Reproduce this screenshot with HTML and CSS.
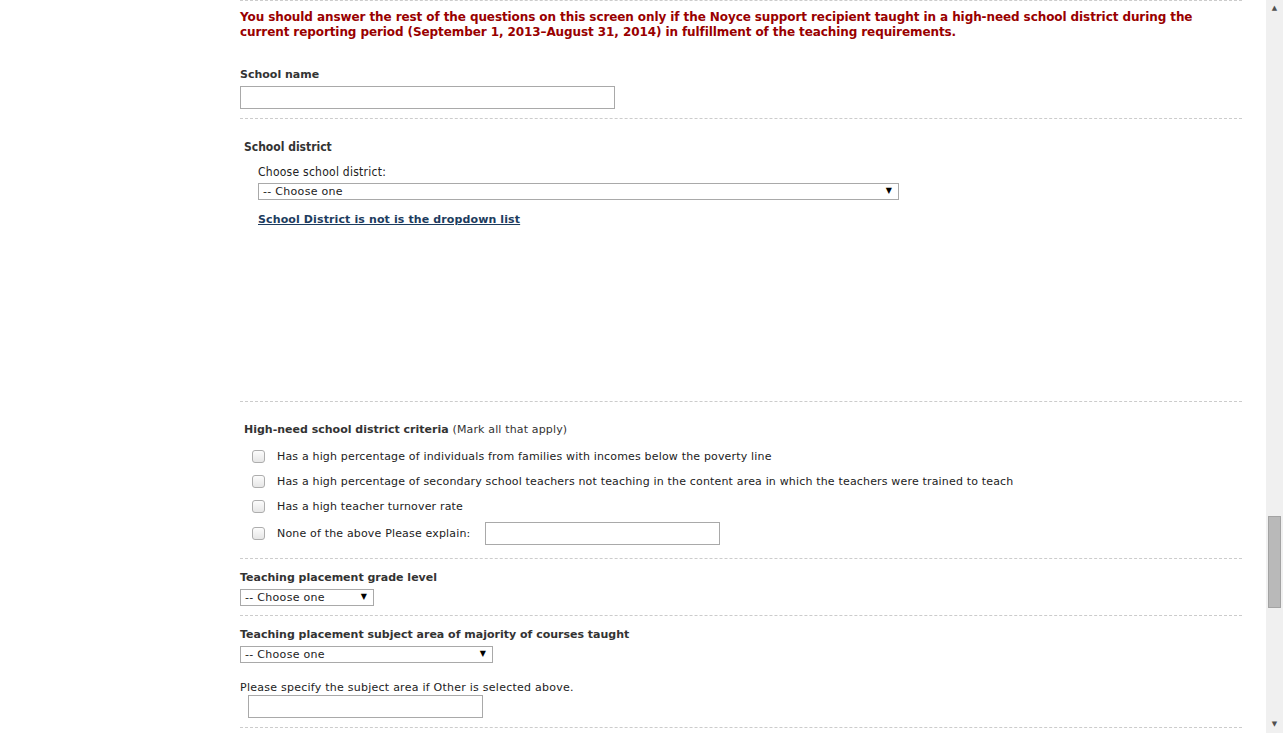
FILE: index.html
```html
<!DOCTYPE html>
<html lang="en">
<head>
    <meta charset="UTF-8">
    <title>Noyce Teacher Placement</title>
    <link rel="stylesheet" href="styles.css">
</head>
<body>
    <div class="window">
        <div class="page">
            <div class="form">
                <div class="section first">
                    <p class="notice">You should answer the rest of the questions on this screen only if the Noyce support recipient taught in a high-need school district during the current reporting period (September 1, 2013&ndash;August 31, 2014) in fulfillment of the teaching requirements.</p>
                    <label class="label" for="schoolName">School name</label>
                    <input type="text" id="schoolName" class="text wide">
                </div>

                <div class="section district">
                    <h3 class="label alt">School district</h3>
                    <div class="district-body">
                        <label class="sub" for="district">Choose school district:</label>
                        <span class="select-wrap full">
                            <select id="district"><option>-- Choose one</option></select>
                        </span>
                        <a href="#" class="missing">School District is not is the dropdown list</a>
                    </div>
                </div>

                <div class="section criteria">
                    <h3 class="label indent">High-need school district criteria <span class="hint">(Mark all that apply)</span></h3>
                    <ul class="checks">
                        <li><input type="checkbox" id="c1"><label for="c1">Has a high percentage of individuals from families with incomes below the poverty line</label></li>
                        <li><input type="checkbox" id="c2"><label for="c2">Has a high percentage of secondary school teachers not teaching in the content area in which the teachers were trained to teach</label></li>
                        <li><input type="checkbox" id="c3"><label for="c3">Has a high teacher turnover rate</label></li>
                        <li class="other"><input type="checkbox" id="c4"><label for="c4">None of the above Please explain:</label><input type="text" class="text explain"></li>
                    </ul>
                </div>

                <div class="section short">
                    <label class="label" for="grade">Teaching placement grade level</label>
                    <span class="select-wrap grade">
                        <select id="grade"><option>-- Choose one</option></select>
                    </span>
                </div>

                <div class="section subject">
                    <label class="label" for="subject">Teaching placement subject area of majority of courses taught</label>
                    <span class="select-wrap subj">
                        <select id="subject"><option>-- Choose one</option></select>
                    </span>
                    <label class="plain" for="otherSubject">Please specify the subject area if Other is selected above.</label>
                    <input type="text" id="otherSubject" class="text other-subject">
                </div>

                <div class="section last"></div>
            </div>
        </div>

        <div class="scrollbar">
            <span class="arrow up">&#9650;</span>
            <div class="track">
                <div class="thumb"></div>
            </div>
            <span class="arrow down">&#9660;</span>
        </div>
    </div>
</body>
</html>
```

FILE: styles.css
```css
html, body {
    margin: 0;
    padding: 0;
    height: 100%;
    overflow: hidden;
    background: #fff;
    font-family: "DejaVu Sans", Verdana, sans-serif;
    font-size: 11px;
    color: #222;
}

.window {
    display: flex;
    height: 733px;
}

.page {
    flex: 1;
    overflow: hidden;
}

.form {
    width: 1002px;
    margin-left: 240px;
}

.section {
    border-top: 1px dashed #ccc;
    display: flex;
    flex-direction: column;
    align-items: flex-start;
}

.first {
    height: 117px;
}

.notice {
    margin: 9px 0 0;
    color: #990000;
    font-weight: bold;
    font-size: 12px;
    line-height: 15px;
    letter-spacing: -0.09px;
}

.label {
    margin: 0;
    font-weight: bold;
    font-size: 11px;
    color: #333;
    line-height: 14px;
}

.first .label {
    margin-top: 28px;
}

.text {
    box-sizing: border-box;
    height: 23px;
    border: 1px solid #a9a9a9;
    background: #fff;
    padding: 2px 4px;
    font: inherit;
}

.wide {
    width: 375px;
    margin-top: 4px;
}

/* school district block */
.district {
    height: 282px;
}

.alt {
    margin: 21px 0 0 4px;
    font-family: "DejaVu Sans Condensed", Tahoma, sans-serif;
    font-size: 12px;
}

.district-body {
    margin-left: 18px;
    display: flex;
    flex-direction: column;
    align-items: flex-start;
}

.sub {
    margin-top: 11px;
    font-family: "DejaVu Sans Condensed", Tahoma, sans-serif;
    font-size: 12px;
    line-height: 14px;
    letter-spacing: 0.25px;
}

.select-wrap {
    position: relative;
    display: block;
}

.select-wrap select {
    appearance: none;
    -webkit-appearance: none;
    box-sizing: border-box;
    width: 100%;
    height: 17px;
    margin: 0;
    padding: 1px 4px 0;
    border: 1px solid #a9a9a9;
    border-radius: 0;
    background: #fff;
    font-family: "DejaVu Sans", Verdana, sans-serif;
    font-size: 11px;
    letter-spacing: 0.3px;
    color: #222;
    line-height: 14px;
}

.select-wrap::after {
    content: "\25BC";
    position: absolute;
    right: 7px;
    top: 3px;
    font-size: 8px;
    line-height: 10px;
    color: #000;
    pointer-events: none;
}

.full {
    width: 641px;
    margin-top: 4px;
}

.missing {
    margin-top: 13px;
    font-weight: bold;
    font-size: 11px;
    letter-spacing: 0.12px;
    color: #1d3c5e;
    line-height: 14px;
}

/* criteria */
.criteria {
    height: 156px;
}

.indent {
    margin: 21px 0 0 4px;
}

.hint {
    font-weight: normal;
    letter-spacing: 0.15px;
}

.checks {
    list-style: none;
    margin: 7px 0 0;
    padding: 0;
    letter-spacing: 0.17px;
}

.checks li {
    display: flex;
    align-items: center;
    height: 25px;
}

.checks li.other {
    height: 27px;
    margin-top: 1px;
}

.checks input[type="checkbox"] {
    appearance: none;
    -webkit-appearance: none;
    width: 13px;
    height: 13px;
    margin: 0 12px 0 12px;
    border: 1px solid #adadad;
    border-radius: 3px;
    background: linear-gradient(#fcfcfc, #e6e6e6);
    box-sizing: border-box;
}

.checks label {
    line-height: 14px;
}

.explain {
    width: 235px;
    margin-left: 15px;
}

/* grade / subject */
.short {
    height: 56px;
}

.short .label,
.subject .label {
    margin-top: 12px;
}

.grade {
    width: 134px;
    margin-top: 4px;
}

.subject {
    height: 111px;
}

.subj {
    width: 253px;
    margin-top: 4px;
}

.plain {
    margin-top: 18px;
    line-height: 14px;
    letter-spacing: 0.25px;
}

.other-subject {
    width: 235px;
    margin: 0 0 0 8px;
}

.last {
    height: 6px;
}

/* fake window scrollbar */
.scrollbar {
    width: 17px;
    background: #f0f0f0;
    display: flex;
    flex-direction: column;
    align-items: center;
}

.arrow {
    height: 17px;
    font-size: 7px;
    line-height: 17px;
    color: #505050;
}

.track {
    flex: 1;
    width: 100%;
    display: flex;
    flex-direction: column;
    padding-top: 499px;
    box-sizing: border-box;
}

.thumb {
    width: 13px;
    height: 92px;
    margin-left: 2px;
    box-sizing: border-box;
    background: #b9b9b9;
    border: 1px solid #a3a3a3;
}
```
